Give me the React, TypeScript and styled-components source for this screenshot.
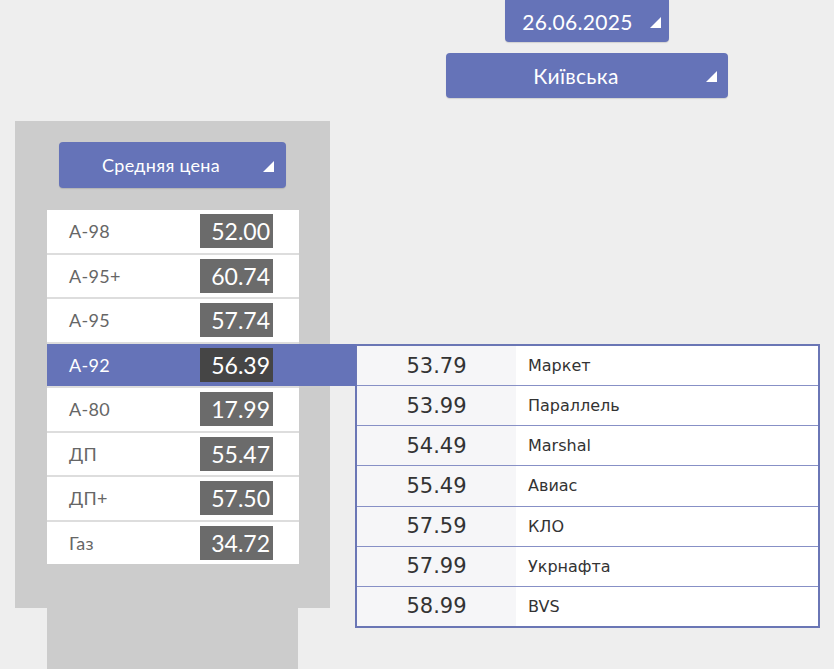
import React from 'react'
import styled, { createGlobalStyle } from 'styled-components'

const GlobalStyle = createGlobalStyle`
  html, body {
    margin: 0;
    padding: 0;
    background: #eeeeee;
    overflow: hidden;
  }
  body {
    width: 834px;
    height: 669px;
    font-family: 'Lato', 'Open Sans', sans-serif;
  }
`

const BLUE = '#6573b8'

const Page = styled.div`
  width: 834px;
  height: 669px;
  display: flex;
  flex-direction: column;
`

const Header = styled.div`
  display: flex;
  flex-direction: column;
  align-items: center;
  gap: 11px;
  width: 282px;
  margin-left: 446px;
`

const Dropdown = styled.div<{ $w: number; $h: number; $pr: number; $size: number; $top?: boolean }>`
  width: ${p => p.$w}px;
  height: ${p => p.$h}px;
  box-sizing: border-box;
  padding-right: ${p => p.$pr}px;
  background: ${BLUE};
  border-radius: ${p => (p.$top ? '0 0 4px 4px' : '4px')};
  display: flex;
  align-items: center;
  color: #fff;
  font-size: ${p => p.$size}px;
  letter-spacing: 0.3px;
  box-shadow: 0 1px 1px rgba(0, 0, 0, 0.12);
  > span {
    flex: 1;
    text-align: center;
  }
`

const Arrow = styled.i`
  width: 0;
  height: 0;
  border-left: 11px solid transparent;
  border-bottom: 11px solid #fff;
  margin-top: 2px;
`

const Body = styled.div`
  display: flex;
  margin-top: 23px;
`

const LeftColumn = styled.div`
  display: flex;
  flex-direction: column;
  margin-left: 15px;
`

const Panel = styled.div`
  width: 315px;
  height: 487px;
  box-sizing: border-box;
  background: #cccccc;
  padding: 21px 0 0 32px;
`

const Stem = styled.div`
  width: 251px;
  height: 70px;
  margin-left: 32px;
  background: #cccccc;
`

const AvgButton = styled(Dropdown)`
  margin-left: 12px;
  margin-bottom: 22px;
`

const FuelList = styled.div`
  width: 252px;
  display: flex;
  flex-direction: column;
  gap: 2px;
  background: #dddddd;
`

const FuelRow = styled.div<{ $active?: boolean }>`
  position: relative;
  height: 42.5px;
  display: flex;
  align-items: center;
  background: ${p => (p.$active ? BLUE : '#fff')};
  color: ${p => (p.$active ? '#fff' : '#666')};
  font-size: 18px;
  ${p =>
    p.$active &&
    `
    &::after {
      content: '';
      position: absolute;
      left: 100%;
      top: 0;
      width: 57px;
      height: 100%;
      background: ${BLUE};
    }
  `}
`

const FuelName = styled.span`
  width: 153px;
  box-sizing: border-box;
  padding-left: 22px;
  letter-spacing: 0.3px;
`

const PriceBox = styled.span<{ $active?: boolean }>`
  width: 73px;
  height: 34px;
  box-sizing: border-box;
  padding-right: 3px;
  background: ${p => (p.$active ? '#454545' : '#6b6b6b')};
  color: #fff;
  font-size: 23px;
  text-align: right;
  line-height: 34px;
`

const StationTable = styled.div`
  margin-left: 25px;
  margin-top: 223px;
  width: 465px;
  height: 284px;
  box-sizing: border-box;
  border: 2px solid #6a76b5;
  display: flex;
  flex-direction: column;
  background: #fff;
  font-family: 'DejaVu Sans', 'Open Sans', sans-serif;
  color: #333;
`

const StationRow = styled.div`
  flex: 1;
  display: flex;
  align-items: stretch;
  & + & {
    border-top: 1px solid #8790c6;
  }
`

const StationPrice = styled.div`
  width: 159px;
  background: #f6f6f8;
  display: flex;
  align-items: center;
  justify-content: center;
  font-size: 21px;
`

const StationName = styled.div`
  flex: 1;
  display: flex;
  align-items: center;
  padding-left: 12px;
  font-size: 16px;
`

const fuels = [
  { name: 'А-98', price: '52.00' },
  { name: 'А-95+', price: '60.74' },
  { name: 'А-95', price: '57.74' },
  { name: 'А-92', price: '56.39', active: true },
  { name: 'А-80', price: '17.99' },
  { name: 'ДП', price: '55.47' },
  { name: 'ДП+', price: '57.50' },
  { name: 'Газ', price: '34.72' },
]

const stations = [
  { price: '53.79', name: 'Маркет' },
  { price: '53.99', name: 'Параллель' },
  { price: '54.49', name: 'Marshal' },
  { price: '55.49', name: 'Авиас' },
  { price: '57.59', name: 'КЛО' },
  { price: '57.99', name: 'Укрнафта' },
  { price: '58.99', name: 'BVS' },
]

export default function App() {
  return (
    <>
      <GlobalStyle />
      <Page>
        <Header>
          <Dropdown $w={164} $h={42} $pr={8} $size={21} $top>
            <span>26.06.2025</span>
            <Arrow />
          </Dropdown>
          <Dropdown $w={282} $h={45} $pr={11} $size={21}>
            <span>Київська</span>
            <Arrow />
          </Dropdown>
        </Header>
        <Body>
          <LeftColumn>
            <Panel>
              <AvgButton $w={227} $h={46} $pr={12} $size={18}>
                <span>Средняя цена</span>
                <Arrow />
              </AvgButton>
              <FuelList>
                {fuels.map(f => (
                  <FuelRow key={f.name} $active={f.active}>
                    <FuelName>{f.name}</FuelName>
                    <PriceBox $active={f.active}>{f.price}</PriceBox>
                  </FuelRow>
                ))}
              </FuelList>
            </Panel>
            <Stem />
          </LeftColumn>
          <StationTable>
            {stations.map(s => (
              <StationRow key={s.name}>
                <StationPrice>{s.price}</StationPrice>
                <StationName>{s.name}</StationName>
              </StationRow>
            ))}
          </StationTable>
        </Body>
      </Page>
    </>
  )
}
